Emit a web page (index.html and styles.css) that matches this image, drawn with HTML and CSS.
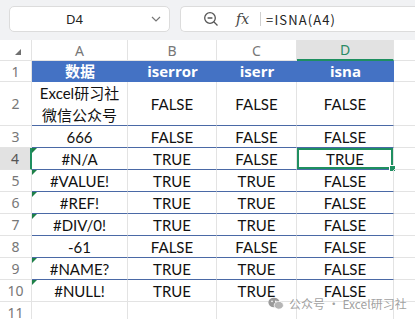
FILE: index.html
```html
<!DOCTYPE html>
<html>
<head>
<meta charset="utf-8">
<link rel="stylesheet" href="styles.css">
</head>
<body>
<div class="app">
  <div class="toolbar">
    <div class="namebox">
      <span class="ref">D4</span>
      <svg class="chev" width="10" height="6" viewBox="0 0 10 6"><path d="M1 1 L5 5 L9 1" fill="none" stroke="#777" stroke-width="1.2"/></svg>
    </div>
    <div class="formula">
      <svg class="zoomi" width="16" height="16" viewBox="0 0 16 16"><circle cx="7" cy="7" r="5.3" fill="none" stroke="#555" stroke-width="1.3"/><path d="M4.6 7 H9.4 M11 11 L14.5 14.5" stroke="#555" stroke-width="1.3" fill="none"/></svg>
      <span class="fx">fx</span>
      <span class="sep"></span>
      <span class="ftext">=ISNA(A4)</span>
    </div>
  </div>
  <div class="sheet">
    <div class="corner"><span class="tri"></span></div>
    <div class="ch">A</div>
    <div class="ch">B</div>
    <div class="ch">C</div>
    <div class="ch ch-sel">D</div>
    <div class="ch blank"></div>

    <div class="rh">1</div>
    <div class="c hd">数据</div>
    <div class="c hd">iserror</div>
    <div class="c hd">iserr</div>
    <div class="c hd">isna</div>
    <div class="c e"></div>

    <div class="rh">2</div>
    <div class="c t zh">Excel研习社<br>微信公众号</div>
    <div class="c t">FALSE</div>
    <div class="c t">FALSE</div>
    <div class="c t">FALSE</div>
    <div class="c e"></div>

    <div class="rh">3</div>
    <div class="c t">666</div>
    <div class="c t">FALSE</div>
    <div class="c t">FALSE</div>
    <div class="c t">FALSE</div>
    <div class="c e"></div>

    <div class="rh rh-sel">4</div>
    <div class="c t err">#N/A</div>
    <div class="c t">TRUE</div>
    <div class="c t">FALSE</div>
    <div class="c t sel">TRUE<span class="handle"></span></div>
    <div class="c e"></div>

    <div class="rh">5</div>
    <div class="c t err">#VALUE!</div>
    <div class="c t">TRUE</div>
    <div class="c t">TRUE</div>
    <div class="c t">FALSE</div>
    <div class="c e"></div>

    <div class="rh">6</div>
    <div class="c t err">#REF!</div>
    <div class="c t">TRUE</div>
    <div class="c t">TRUE</div>
    <div class="c t">FALSE</div>
    <div class="c e"></div>

    <div class="rh">7</div>
    <div class="c t err">#DIV/0!</div>
    <div class="c t">TRUE</div>
    <div class="c t">TRUE</div>
    <div class="c t">FALSE</div>
    <div class="c e"></div>

    <div class="rh">8</div>
    <div class="c t">-61</div>
    <div class="c t">FALSE</div>
    <div class="c t">FALSE</div>
    <div class="c t">FALSE</div>
    <div class="c e"></div>

    <div class="rh">9</div>
    <div class="c t err">#NAME?</div>
    <div class="c t">TRUE</div>
    <div class="c t">TRUE</div>
    <div class="c t">FALSE</div>
    <div class="c e"></div>

    <div class="rh">10</div>
    <div class="c last err">#NULL!</div>
    <div class="c last">TRUE</div>
    <div class="c last">TRUE</div>
    <div class="c last">FALSE</div>
    <div class="c e"></div>

    <div class="rh">11</div>
    <div class="c"></div>
    <div class="c"></div>
    <div class="c"></div>
    <div class="c"></div>
    <div class="c e"></div>
  </div>
  <div class="watermark">
    <svg width="16" height="13" viewBox="0 0 16 13"><ellipse cx="6" cy="5.5" rx="5.6" ry="4.8" fill="#9a9a9a"/><ellipse cx="10.8" cy="8.3" rx="4.6" ry="3.9" fill="#b5b5b5" stroke="#fff" stroke-width="0.8"/><circle cx="4" cy="4.4" r="0.8" fill="#fff"/><circle cx="7.8" cy="4.4" r="0.8" fill="#fff"/></svg>
    <span>公众号 · Excel研习社</span>
  </div>
</div>
</body>
</html>
```

FILE: styles.css
```css
* { box-sizing: border-box; }
html, body { margin: 0; padding: 0; }
body {
  width: 415px;
  height: 319px;
  overflow: hidden;
  background: #fff;
  font-family: Lato, "Noto Sans CJK SC", sans-serif;
}
.app { position: relative; width: 415px; height: 319px; overflow: hidden; }

.toolbar {
  height: 40px;
  background: #f1f2f4;
  display: flex;
  align-items: flex-start;
  padding: 6px 0 0 9px;
  gap: 10px;
}
.namebox {
  width: 161px;
  height: 26px;
  background: #fff;
  border: 1px solid #dcdcdc;
  border-radius: 5px;
  display: flex;
  align-items: center;
  position: relative;
}
.namebox .ref {
  flex: 1;
  text-align: center;
  font-family: "Noto Sans", sans-serif;
  font-size: 13px;
  color: #222;
  padding-right: 12px;
}
.namebox .chev { margin-right: 8px; }
.formula {
  flex: 1;
  height: 26px;
  background: #fff;
  border: 1px solid #dcdcdc;
  border-right: none;
  border-radius: 5px 0 0 5px;
  display: flex;
  align-items: center;
  padding-left: 22px;
}
.zoomi { margin-right: 17px; }
.fx {
  font-family: "DejaVu Serif", serif;
  font-style: italic;
  font-size: 14px;
  color: #444;
  margin-right: 11px;
}
.sep { width: 1px; height: 14px; background: #d0d0d0; margin-right: 5px; }
.ftext {
  font-family: "Noto Sans CJK SC", "DejaVu Sans Mono", monospace;
  font-size: 13px;
  color: #222;
  letter-spacing: 1.1px;
}

.sheet {
  display: grid;
  grid-template-columns: 32px 96px 89px 80px 97px 1fr;
  grid-template-rows: 21px 21px 44px repeat(9, 22px);
}
.corner, .ch, .rh {
  color: #777;
  font-family: "Noto Sans", sans-serif;
  display: flex;
  align-items: center;
  justify-content: center;
  border-right: 1px solid #e3e3e3;
  border-bottom: 1px solid #e3e3e3;
  background: #fff;
}
.ch { font-size: 14px; }
.rh { font-size: 14px; }
.corner { position: relative; }
.tri {
  width: 0; height: 0;
  border-left: 6px solid transparent;
  border-bottom: 6px solid #707070;
  margin-left: 4px;
  margin-top: 4px;
}
.ch-sel {
  background: #e2e2e2;
  color: #2a8a65;
  border-bottom: 2px solid #1f8f60;
}
.rh-sel {
  background: #e2e2e2;
  border-right: 2px solid #1f8f60;
  color: #555;
}
.blank { border-right: none; }

.c {
  border-right: 1px solid #e3e3e3;
  border-bottom: 1px solid #e3e3e3;
  display: flex;
  align-items: center;
  justify-content: center;
  text-align: center;
  font-size: 15px;
  color: #111;
  position: relative;
  line-height: 1.2;
}
.c.e { border-right: none; }
.hd {
  background: #4472c4;
  color: #fff;
  font-weight: bold;
  border-right: none;
  border-bottom: 1px solid #4472c4;
  font-family: "Open Sans", "Noto Sans CJK SC", sans-serif;
  font-size: 15px;
}
.t { border-bottom: 1px solid #4a69a6; }
.zh { line-height: 22px; font-family: Lato, "Noto Sans CJK SC", sans-serif; }
.err::before {
  content: "";
  position: absolute;
  left: 0; top: 0;
  border-top: 5px solid #1e8049;
  border-right: 5px solid transparent;
}
.sel {
  box-shadow: inset 0 0 0 2px #1f8f60;
}
.handle {
  position: absolute;
  right: -3px;
  bottom: -3px;
  width: 5px;
  height: 5px;
  background: #1f8f60;
  border: 1px solid #fff;
  box-sizing: content-box;
}

.watermark {
  position: absolute;
  left: 268px;
  top: 295px;
  display: flex;
  align-items: center;
  gap: 5px;
  font-family: "Noto Sans CJK SC", sans-serif;
  font-size: 12px;
  color: rgba(130, 130, 130, 0.75);
}
```
